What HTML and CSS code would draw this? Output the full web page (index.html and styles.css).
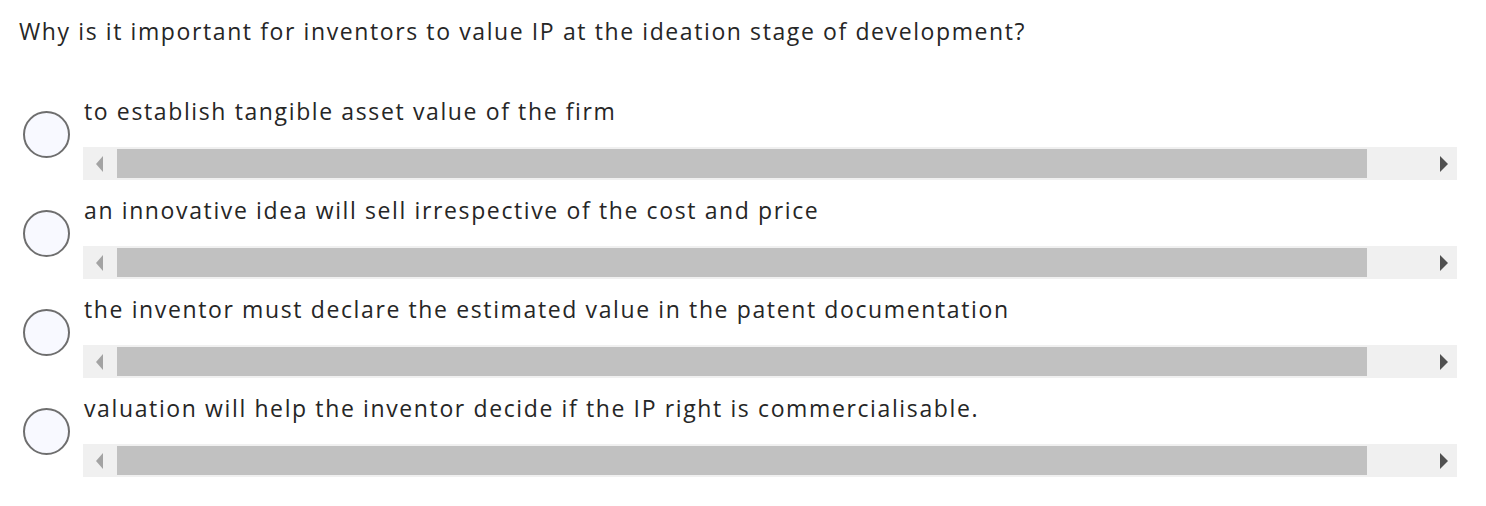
FILE: index.html
```html
<!DOCTYPE html>
<html>
<head>
<meta charset="utf-8">
<link rel="stylesheet" href="styles.css">
</head>
<body>
<div class="question">
  <p class="title">Why is it important for inventors to value IP at the ideation stage of development?</p>
  <ul class="options">
    <li class="option">
      <span class="radio"></span>
      <div class="body">
        <div class="label">to establish tangible asset value of the firm</div>
        <div class="scrollbar"><span class="btn left"></span><span class="thumb"></span><span class="btn right"></span></div>
      </div>
    </li>
    <li class="option">
      <span class="radio"></span>
      <div class="body">
        <div class="label">an innovative idea will sell irrespective of the cost and price</div>
        <div class="scrollbar"><span class="btn left"></span><span class="thumb"></span><span class="btn right"></span></div>
      </div>
    </li>
    <li class="option">
      <span class="radio"></span>
      <div class="body">
        <div class="label">the inventor must declare the estimated value in the patent documentation</div>
        <div class="scrollbar"><span class="btn left"></span><span class="thumb"></span><span class="btn right"></span></div>
      </div>
    </li>
    <li class="option">
      <span class="radio"></span>
      <div class="body">
        <div class="label">valuation will help the inventor decide if the IP right is commercialisable.</div>
        <div class="scrollbar"><span class="btn left"></span><span class="thumb"></span><span class="btn right"></span></div>
      </div>
    </li>
  </ul>
</div>
</body>
</html>
```
FILE: styles.css
```css
html, body {
  margin: 0;
  padding: 0;
  background: #ffffff;
}
body {
  font-family: "Open Sans", "Noto Sans", sans-serif;
  color: #262626;
}
.question {
  padding: 16px 29px 0 19px;
}
.title {
  margin: 0;
  font-size: 23px;
  line-height: 30px;
  letter-spacing: 1.6px;
}
.options {
  list-style: none;
  margin: 0;
  padding: 0;
  margin-top: 50px;
  display: flex;
  flex-direction: column;
  gap: 15px;
}
.option {
  display: flex;
  align-items: flex-start;
  gap: 13px;
}
.radio {
  flex: 0 0 auto;
  width: 43px;
  height: 43px;
  border: 2px solid #6e6e6e;
  border-radius: 50%;
  background: #f8f9ff;
  margin-top: 15px;
  margin-left: 4px;
  margin-right: 1px;
}
.body {
  flex: 1 1 auto;
  display: flex;
  flex-direction: column;
  gap: 21px;
}
.label {
  font-size: 23px;
  line-height: 30px;
  letter-spacing: 1.62px;
  white-space: nowrap;
}
.scrollbar {
  height: 33px;
  background: #f0f0f0;
  display: flex;
  align-items: center;
  margin-left: -1px;
}
.btn {
  width: 34px;
  height: 33px;
  display: flex;
  align-items: center;
  justify-content: center;
  flex: 0 0 auto;
}
.btn::before {
  content: "";
  width: 0;
  height: 0;
  border-top: 8px solid transparent;
  border-bottom: 8px solid transparent;
}
.btn.left::before {
  border-right: 7px solid #a3a3a3;
  margin-left: -2px;
}
.btn.right {
  margin-left: auto;
}
.btn.right::before {
  border-left: 8px solid #505050;
  margin-left: 8px;
}
.thumb {
  width: 1250px;
  height: 29px;
  background: #c1c1c1;
}
```
